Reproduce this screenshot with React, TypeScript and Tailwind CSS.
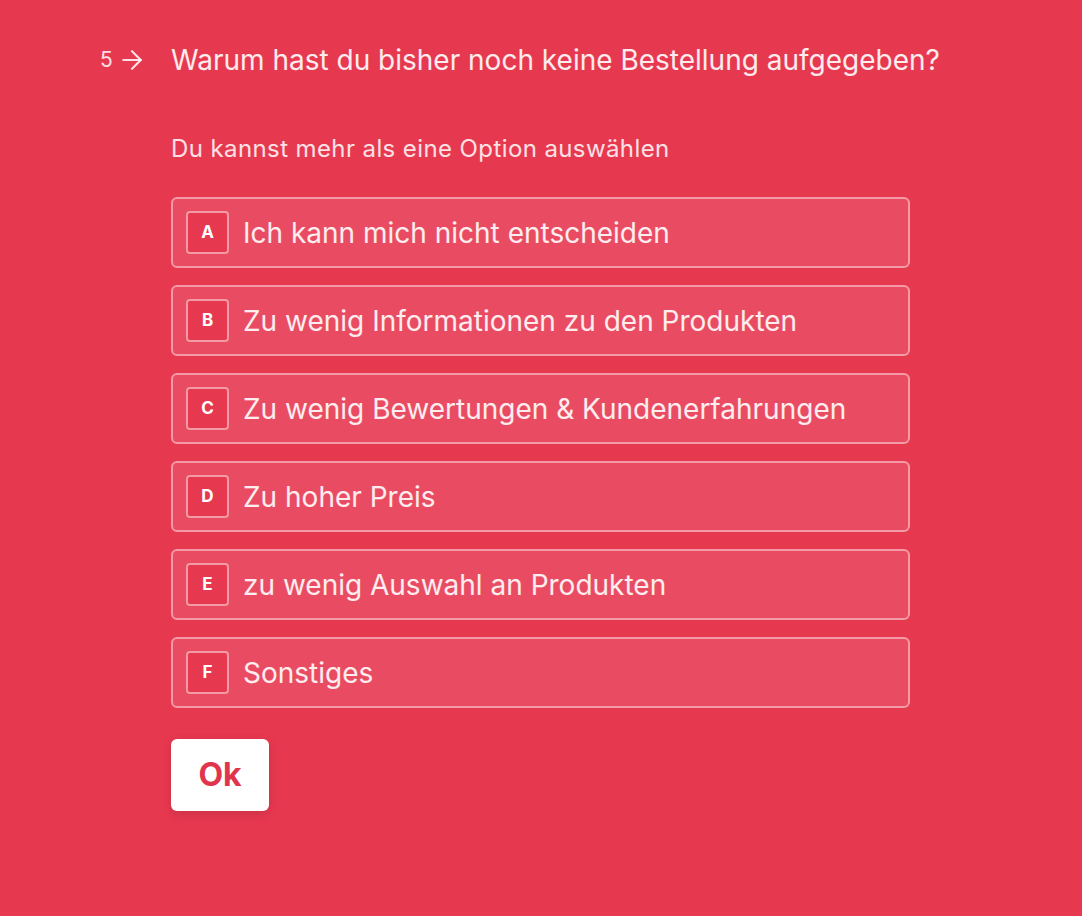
import { ArrowRight } from "lucide-react";

const options = [
  { key: "A", label: "Ich kann mich nicht entscheiden" },
  { key: "B", label: "Zu wenig Informationen zu den Produkten" },
  { key: "C", label: "Zu wenig Bewertungen & Kundenerfahrungen" },
  { key: "D", label: "Zu hoher Preis" },
  { key: "E", label: "zu wenig Auswahl an Produkten" },
  { key: "F", label: "Sonstiges" },
];

export default function App() {
  return (
    <div
      className="min-h-[916px] w-full bg-[#e6384f] text-white/90"
      style={{ fontFamily: "Inter, 'Noto Sans', sans-serif" }}
    >
      <div className="pl-[100px] pt-[41px]">
        {/* Question */}
        <div className="flex items-center h-[38px]">
          <div className="w-[71px] flex items-center gap-[4px] text-[21px] text-white/85">
            <span>5</span>
            <ArrowRight size={30} strokeWidth={1.7} />
          </div>
          <h1 className="text-[28px] leading-none text-white/90">
            Warum hast du bisher noch keine Bestellung aufgegeben?
          </h1>
        </div>

        <div className="ml-[71px]">
          <p className="mt-[58px] text-[24px] tracking-[0.4px] leading-none text-white/85">
            Du kannst mehr als eine Option auswählen
          </p>

          {/* Options */}
          <div className="mt-[36px] flex flex-col gap-[17px] w-[739px]">
            {options.map((o) => (
              <div
                key={o.key}
                className="h-[71px] flex items-center rounded-[6px] border-2 border-[#f39aa6] bg-[#e94c62] px-[13px]"
              >
                <div className="w-[43px] h-[43px] flex items-center justify-center rounded-[4px] border-2 border-[#f39aa6] bg-[#e6394f] text-[17px] font-bold text-white">
                  {o.key}
                </div>
                <span className="ml-[14px] text-[28px] text-white/90">{o.label}</span>
              </div>
            ))}
          </div>

          {/* Submit */}
          <button className="mt-[31px] w-[98px] h-[72px] rounded-[6px] bg-white text-[#e0354d] text-[32px] font-bold shadow-[0_3px_10px_rgba(0,0,0,0.12)]">
            Ok
          </button>
        </div>
      </div>
    </div>
  );
}
